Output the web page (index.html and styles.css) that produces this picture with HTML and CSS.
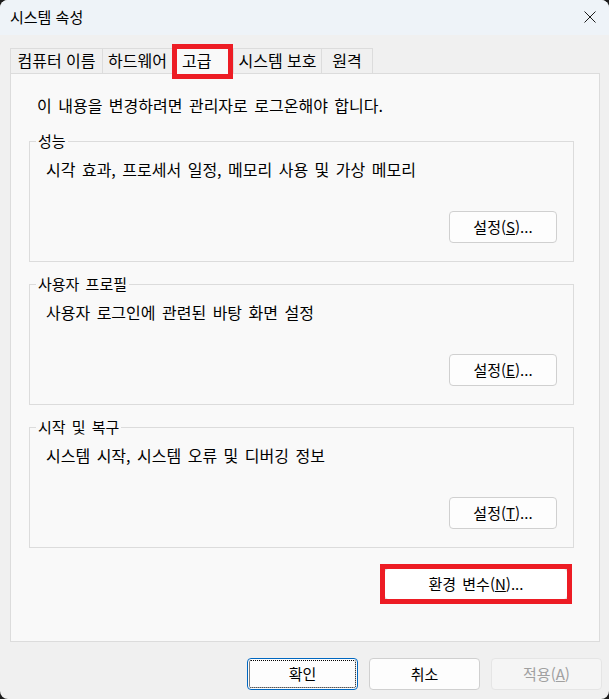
FILE: index.html
```html
<!DOCTYPE html>
<html lang="ko">
<head>
<meta charset="utf-8">
<title>시스템 속성</title>
<link rel="stylesheet" href="styles.css">
</head>
<body>
<div class="window">
  <div class="titlebar">
    <span class="title">시스템 속성</span>
    <svg class="close" viewBox="0 0 12 12" aria-hidden="true"><path d="M0.5 0.5L11.5 11.5M11.5 0.5L0.5 11.5" stroke="#1b1b1b" stroke-width="1" fill="none"/></svg>
  </div>
  <div class="tabs">
    <div class="tab tab-name">컴퓨터 이름</div>
    <div class="tab tab-hw">하드웨어</div>
    <div class="tab tab-adv active">고급</div>
    <div class="tab tab-prot">시스템 보호</div>
    <div class="tab tab-remote">원격</div>
  </div>
  <div class="panel">
    <p class="intro">이 내용을 변경하려면 관리자로 로그온해야 합니다.</p>
    <fieldset class="group">
      <legend>성능</legend>
      <p class="desc">시각 효과, 프로세서 일정, 메모리 사용 및 가상 메모리</p>
      <div class="actions"><button class="btn">설정(<u>S</u>)...</button></div>
    </fieldset>
    <fieldset class="group">
      <legend>사용자 프로필</legend>
      <p class="desc">사용자 로그인에 관련된 바탕 화면 설정</p>
      <div class="actions"><button class="btn">설정(<u>E</u>)...</button></div>
    </fieldset>
    <fieldset class="group">
      <legend>시작 및 복구</legend>
      <p class="desc">시스템 시작, 시스템 오류 및 디버깅 정보</p>
      <div class="actions"><button class="btn">설정(<u>T</u>)...</button></div>
    </fieldset>
    <div class="env-row"><button class="btn btn-env">환경 변수(<u>N</u>)...</button></div>
  </div>
  <div class="footer">
    <button class="btn btn-wide btn-ok">확인</button>
    <button class="btn btn-wide">취소</button>
    <button class="btn btn-wide btn-disabled">적용(<u>A</u>)</button>
  </div>
</div>
</body>
</html>
```
FILE: styles.css
```css
html, body {
  margin: 0;
  padding: 0;
}
body {
  background: #1c1c1c;
  font-family: "Noto Sans CJK KR", "Malgun Gothic", sans-serif;
  font-size: 15px;
  color: #000;
}
.window {
  width: 609px;
  height: 699px;
  background: #f0f0f0;
  border-radius: 8px;
  overflow: hidden;
  display: flex;
  flex-direction: column;
}
.titlebar {
  height: 35px;
  box-sizing: border-box;
  background: #eef3f8;
  display: flex;
  align-items: center;
  justify-content: space-between;
  padding: 0 13px 1px 10px;
}
.title {
  line-height: 20px;
}
.close {
  width: 12px;
  height: 12px;
  display: block;
}
.tabs {
  display: flex;
  align-items: flex-end;
  height: 27px;
  padding: 11px 0 0 10px;
}
.tab {
  height: 25px;
  box-sizing: border-box;
  border: 1px solid #dcdcdc;
  border-bottom: 0;
  border-right: 0;
  font-size: 16px;
  line-height: 23px;
  text-align: center;
  white-space: nowrap;
  background: #f0f0f0;
}
.tab-name { width: 92px; }
.tab-hw { width: 70px; }
.tab-adv { width: 61px; }
.tab-prot { width: 88px; }
.tab-remote { width: 52px; border-right: 1px solid #dcdcdc; }
.tab.active {
  height: 28px;
  margin-bottom: -1px;
  background: #f9f9f9;
  position: relative;
  z-index: 1;
  line-height: 26px;
  text-align: left;
  padding-left: 9px;
}
.tab.active::after {
  content: "";
  position: absolute;
  left: -1px;
  right: 0;
  top: -3px;
  bottom: -5px;
  border: 5px solid #ed1c24;
  box-sizing: border-box;
}
.panel {
  margin: 0 9px 0 10px;
  height: 569px;
  box-sizing: border-box;
  border: 1px solid #dcdcdc;
  background: #f9f9f9;
  padding: 21px 25px 0 18px;
}
.intro {
  margin: 0 0 0 8px;
  font-size: 16px;
  word-spacing: 2px;
  line-height: 20px;
}
.group {
  margin: 16px 0 0;
  padding: 8px 16px 18px;
  border: 1px solid #dcdcdc;
  min-width: 0;
}
.group + .group {
  margin-top: 12px;
}
.group legend {
  padding: 0 2px;
  margin-left: -10px;
  line-height: 20px;
  word-spacing: 2px;
}
.desc {
  margin: 0;
  font-size: 16px;
  word-spacing: 2px;
  line-height: 20px;
}
.actions {
  display: flex;
  justify-content: flex-end;
  margin-top: 32px;
}
.btn {
  width: 108px;
  height: 32px;
  box-sizing: border-box;
  border: 1px solid #d0d0d0;
  border-radius: 4px;
  background: #fdfdfd;
  font: inherit;
  color: #000;
  line-height: 20px;
  padding: 0;
}
.env-row {
  display: flex;
  justify-content: flex-end;
  margin-top: 20px;
  padding-right: 6px;
}
.btn-env {
  width: 184px;
  position: relative;
  background: #fff;
  word-spacing: 2px;
}
.btn-env::after {
  content: "";
  position: absolute;
  inset: -5px;
  border: 5px solid #ed1c24;
}
.footer {
  display: flex;
  justify-content: flex-end;
  gap: 11px;
  padding: 16px 7px 0 0;
}
.btn-wide {
  width: 111px;
}
.btn-ok {
  border-color: #0067c0;
  outline: 1px dotted #000;
  outline-offset: -3px;
}
.btn-disabled {
  color: #a0a0a0;
  background: #f5f5f5;
  border-color: #e5e5e5;
}
```
